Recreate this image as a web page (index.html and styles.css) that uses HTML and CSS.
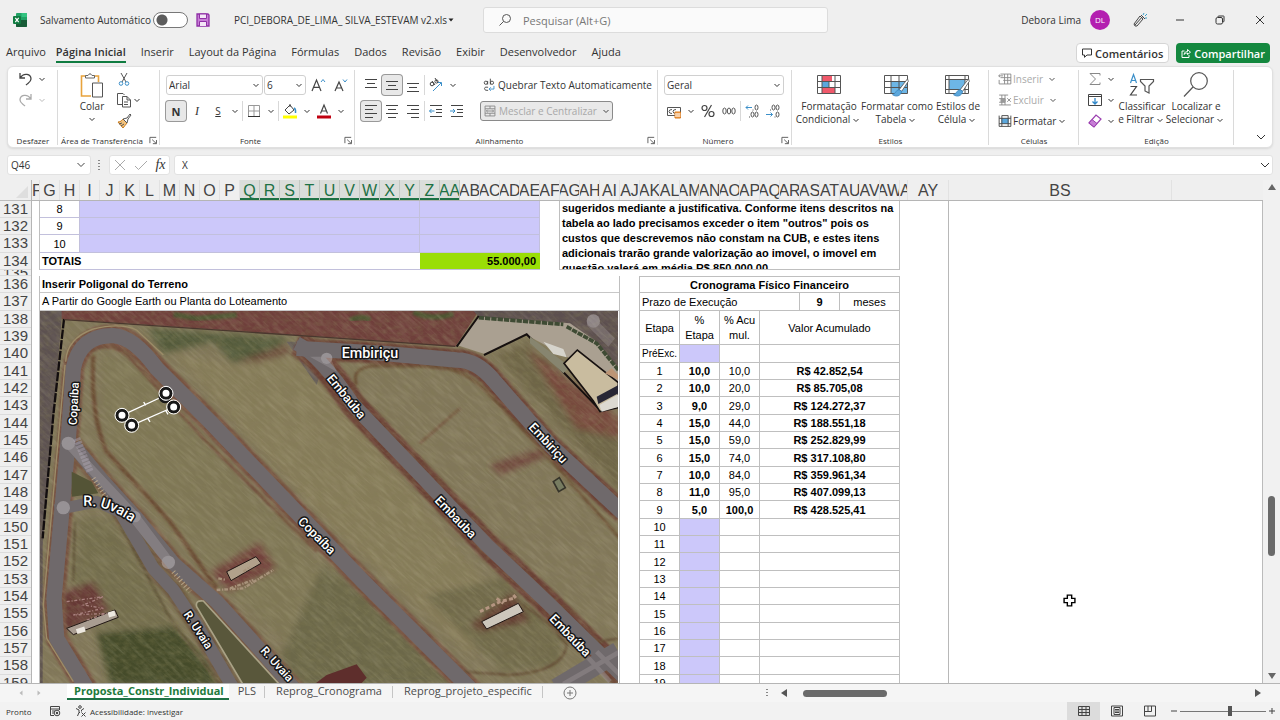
FILE: index.html
```html
<!DOCTYPE html>
<html lang="pt-BR">
<head>
<meta charset="utf-8">
<title>PCI_DEBORA_DE_LIMA_ SILVA_ESTEVAM v2.xls</title>
<link rel="stylesheet" href="styles.css">
</head>
<body>
<svg class="defs" aria-hidden="true">
  <symbol id="chev" viewBox="0 0 12 12"><path d="M3.500 5 6 7.500 8.500 5" fill="none" stroke="currentColor"/></symbol>
  <symbol id="launch" viewBox="0 0 10 10"><path d="M1 8V1.500H8M3.500 4 8 8.300M8.300 4.500V8.500H4.300" fill="none" stroke="#555"/></symbol>
  <symbol id="brush" viewBox="0 0 20 24"><path d="M19 1 9 14l3 2L20 4z" fill="#fff" stroke="#555"/><path d="M9 14c-4 0-4 5-8 6 4 3 10 2 11-4z" fill="#5ba7dc" stroke="#3a87c0"/></symbol>
</svg>

<header class="titlebar">
  <svg class="logo" viewBox="0 0 14 14"><rect x="3" y="0" width="11" height="14" rx="1" fill="#21a366"/><path d="M8.500 0H13a1 1 0 0 1 1 1v3H8.500z" fill="#33c481"/><path d="M3 7h11v6a1 1 0 0 1-1 1H4a1 1 0 0 1-1-1z" fill="#185c37"/><rect y="3" width="8" height="8" rx="1" fill="#107c41"/><path d="m2.300 4.800 3.400 4.400m0-4.400L2.300 9.200" stroke="#fff" stroke-width="1.200"/></svg>
  <label class="autosave">Salvamento Automático <input type="checkbox" class="toggle"></label>
  <button class="plain save" aria-label="Salvar"><svg viewBox="0 0 14 14"><path d="M1 1h11l1 1v11H1z" fill="#c77ed6" stroke="#8f2fa5" stroke-width="1.300"/><path d="M3.500 1h7v4.500h-7zM3.500 13V8.500h7V13" fill="#f4e6f7" stroke="#8f2fa5"/></svg></button>
  <button class="plain docname">PCI_DEBORA_DE_LIMA_ SILVA_ESTEVAM v2.xls <svg viewBox="0 0 8 8"><path d="M1.500 2.500h5L4 5.500z" fill="#222"/></svg></button>
  <label class="search"><svg viewBox="0 0 14 14"><circle cx="8.500" cy="5.500" r="4" fill="none" stroke="#555"/><path d="M5.500 8.500 1.500 12.500" stroke="#555"/></svg><input type="text" placeholder="Pesquisar (Alt+G)" aria-label="Pesquisar"></label>
  <div class="account">
    <span>Debora Lima</span><span class="avatar">DL</span>
    <button class="plain win" aria-label="Novidades"><svg viewBox="0 0 16 16"><path d="M8 4 2 12l1 2h2l6-7zM3 13l8-9M9 3l4 4" fill="none" stroke="#444"/><path d="m11 3 1-2M13 4l2-2M13 6l2 0" stroke="#3aa0c8"/></svg></button>
    <button class="plain win" aria-label="Minimizar"><svg viewBox="0 0 16 16"><path d="M4 8h8" stroke="#333"/></svg></button>
    <button class="plain win" aria-label="Restaurar"><svg viewBox="0 0 16 16"><rect x="4" y="5.500" width="6.500" height="6.500" rx="1.500" fill="none" stroke="#333"/><path d="M6 5V4.500q0-.5 1-.5h4.500q.5 0 .5.500V9q0 1-1 1" fill="none" stroke="#333"/></svg></button>
    <button class="plain win" aria-label="Fechar"><svg viewBox="0 0 16 16"><path d="m4 4 8 8m0-8-8 8" stroke="#333"/></svg></button>
  </div>
</header>

<nav class="tabs">
  <a href="#" class="file">Arquivo</a><a href="#" class="active">Página Inicial</a><a href="#">Inserir</a><a href="#">Layout da Página</a><a href="#">Fórmulas</a><a href="#">Dados</a><a href="#">Revisão</a><a href="#">Exibir</a><a href="#">Desenvolvedor</a><a href="#">Ajuda</a>
  <div class="tab-actions">
    <button class="comment"><svg viewBox="0 0 10 10"><path d="M.5 1h9v6H5L2.500 9.300V7h-2z" fill="none" stroke="#333"/></svg>Comentários</button>
    <button class="share"><svg viewBox="0 0 10 10"><path d="M3.500 3H1v6.500h7V7M3 6.500C3.500 4 5 3.500 6.500 3.500V1.500L9.500 4.200 6.500 6.500V5C5 5 4 5.500 3 6.500z" fill="none" stroke="#fff"/></svg>Compartilhar</button>
  </div>
</nav>

<section class="ribbon">
  <div class="group g-undo">
    <div class="body three">
      <div class="row"><button class="ib"><svg viewBox="0 0 20 20"><path d="M4 4v5h5M4 9c4-6 11-4 11 1 0 3-3 4-5 6" fill="none" stroke="#444" stroke-width="1.300"/></svg></button><button class="cv"><svg><use href="#chev"/></svg></button></div>
      <div class="row off"><button class="ib"><svg viewBox="0 0 20 20"><path d="M15 4v5h-5M15 9C11 3 4 5 4 10c0 3 3 4 5 6" fill="none" stroke="#aaa" stroke-width="1.300"/></svg></button><button class="cv"><svg><use href="#chev"/></svg></button></div>
    </div>
    <div class="glabel">Desfazer</div>
  </div>

  <div class="group g-clip">
    <div class="body">
      <button class="big"><svg viewBox="0 0 24 26"><path d="M6 4H1.500v20H11M14 4h4.500v6" fill="none" stroke="#e8a33d" stroke-width="1.600"/><path d="M5.500 6V3.500H8Q10 0 12 3.500h2.500V6z" fill="#fff" stroke="#666"/><path d="M12.500 11h10v14h-10z" fill="#fff" stroke="#555"/></svg><span>Colar</span><svg class="c"><use href="#chev"/></svg></button>
      <div class="three">
        <div class="row"><button class="ib"><svg viewBox="0 0 20 20"><path d="m7 4 5 9M13 4 8 13" stroke="#555" fill="none"/><circle cx="7" cy="14.500" r="1.800" fill="none" stroke="#3b8fc9"/><circle cx="13" cy="14.500" r="1.800" fill="none" stroke="#3b8fc9"/></svg></button></div>
        <div class="row"><button class="ib"><svg viewBox="0 0 20 20"><path d="M8 14.500H3.500v-11H9l1.500 1.500M8.500 6.500h4.500l3.500 3.500v7h-8zM13 6.500V10h3.500M10 12h4M10 14.500h4" fill="none" stroke="#555"/></svg></button><button class="cv"><svg><use href="#chev"/></svg></button></div>
        <div class="row"><button class="ib"><svg viewBox="0 0 20 20"><path d="M4 11c3 0 4-2 5-3l4 4c-1 2-3 3-4 5z" fill="#f3c27c" stroke="#c87a1c"/><path d="m9 8 4-1 3-4 1 1-3 4-1 4zM5 13l3-1M7 15l3-2" fill="none" stroke="#555"/></svg></button></div>
      </div>
    </div>
    <div class="glabel">Área de Transferência<svg class="la"><use href="#launch"/></svg></div>
  </div>

  <div class="group g-font">
    <div class="body two">
      <div class="row">
        <span class="sel s-font"><select aria-label="Fonte"><option>Arial</option></select><svg><use href="#chev"/></svg></span>
        <span class="sel s-size"><select aria-label="Tamanho"><option>6</option></select><svg><use href="#chev"/></svg></span>
        <button class="ib"><svg viewBox="0 0 20 20"><path d="m4 16 4.500-11L13 16M5.500 12.300h6" fill="none" stroke="#444" stroke-width="1.200"/><path d="m13 7 2-2.500L17 7" fill="none" stroke="#3b8fc9"/></svg></button>
        <button class="ib"><svg viewBox="0 0 20 20"><path d="m5 16 4-9 4 9M6.500 13h5" fill="none" stroke="#444" stroke-width="1.200"/><path d="m13 4.500 2 2.500 2-2.500" fill="none" stroke="#3b8fc9"/></svg></button>
      </div>
      <div class="row">
        <button class="ib on bold">N</button><button class="ib ital">I</button><button class="ib under">S</button><button class="cv"><svg><use href="#chev"/></svg></button><i class="sp"></i>
        <button class="ib"><svg viewBox="0 0 20 20"><path d="M4.500 4.500h11v11h-11zM10 4.500v11M4.500 10h11" fill="none" stroke="#999"/><path d="M4 15.500h12" stroke="#333"/></svg></button><button class="cv"><svg><use href="#chev"/></svg></button><i class="sp"></i>
        <button class="ib"><svg viewBox="0 0 20 20"><path d="m5 9 5-5 4 5-5 4zM10 6V3" fill="none" stroke="#444"/><path d="M14 7q2 1 1.500 5" fill="none" stroke="#3b8fc9" stroke-width="1.500"/><path d="M3 14.500h14v3H3z" fill="#ff0"/></svg></button><button class="cv"><svg><use href="#chev"/></svg></button>
        <button class="ib"><svg viewBox="0 0 20 20"><path d="M6.500 12.500 10 4l3.500 8.500M7.500 10h5" fill="none" stroke="#444" stroke-width="1.200"/><path d="M3 14.500h14v3H3z" fill="#c00010"/></svg></button><button class="cv"><svg><use href="#chev"/></svg></button>
      </div>
    </div>
    <div class="glabel">Fonte<svg class="la"><use href="#launch"/></svg></div>
  </div>

  <div class="group g-align">
    <div class="body two">
      <div class="row">
        <button class="ib"><svg viewBox="0 0 20 20"><path d="M4 4.500h12M6 8.500h8M4 12.500h12" stroke="#444"/></svg></button>
        <button class="ib on"><svg viewBox="0 0 20 20"><path d="M4 6.500h12M6 10.500h8M4 14.500h12" stroke="#444"/></svg></button>
        <button class="ib"><svg viewBox="0 0 20 20"><path d="M4 8.500h12M6 12.500h8M4 16.500h12" stroke="#444"/></svg></button><i class="sp"></i>
        <button class="ib"><svg viewBox="0 0 20 20"><g fill="none" stroke="#444"><circle cx="6" cy="9" r="1.800"/><path d="m6 6 3 4M9 3l3 5"/><circle cx="10.500" cy="6.500" r="1.600"/></g><path d="m7 16 8-8M12 7.500h3.500V11" fill="none" stroke="#3b8fc9"/></svg></button><button class="cv"><svg><use href="#chev"/></svg></button>
      </div>
      <div class="row">
        <button class="ib on"><svg viewBox="0 0 20 20"><path d="M4 4.500h12M4 8.500h8M4 12.500h12M4 16.500h8" stroke="#444"/></svg></button>
        <button class="ib"><svg viewBox="0 0 20 20"><path d="M4 4.500h12M6 8.500h8M4 12.500h12M6 16.500h8" stroke="#444"/></svg></button>
        <button class="ib"><svg viewBox="0 0 20 20"><path d="M4 4.500h12M8 8.500h8M4 12.500h12M8 16.500h8" stroke="#444"/></svg></button><i class="sp"></i>
        <button class="ib"><svg viewBox="0 0 20 20"><path d="M4 4.500h12M10 8.500h6M10 11.500h6M4 15.500h12" stroke="#444"/><path d="M8.500 10h-5m2-2-2 2 2 2" fill="none" stroke="#3b8fc9"/></svg></button>
        <button class="ib"><svg viewBox="0 0 20 20"><path d="M4 4.500h12M10 8.500h6M10 11.500h6M4 15.500h12" stroke="#444"/><path d="M3 10h5m-2-2 2 2-2 2" fill="none" stroke="#3b8fc9"/></svg></button>
      </div>
    </div>
    <div class="body two wraps">
      <div class="row"><button class="txt"><svg viewBox="0 0 20 20"><g fill="none" stroke="#444"><circle cx="6.500" cy="7.500" r="1.800"/><path d="M8.500 5.500v4M11.500 3v6.500M9 12.500q-4-1-4 1.500t4 2"/><circle cx="13.300" cy="7.500" r="1.800"/></g><path d="M15.500 11v3.500H10m2-2-2 2 2 2" fill="none" stroke="#3b8fc9"/></svg>Quebrar Texto Automaticamente</button></div>
      <div class="row"><button class="txt merge"><svg viewBox="0 0 20 20"><path d="M4.500 4.500h11v11h-11zM4.500 7.500h11M4.500 12.500h11M10 4.500v3M10 12.500v3M6 10h8M7.500 8.500 6 10l1.500 1.500M12.500 8.500 14 10l-1.500 1.500" fill="none" stroke="#888"/></svg>Mesclar e Centralizar<svg class="c"><use href="#chev"/></svg></button></div>
    </div>
    <div class="glabel">Alinhamento<svg class="la"><use href="#launch"/></svg></div>
  </div>

  <div class="group g-num">
    <div class="body two">
      <div class="row"><span class="sel s-num"><select aria-label="Formato de número"><option>Geral</option></select><svg><use href="#chev"/></svg></span></div>
      <div class="row">
        <button class="ib"><svg viewBox="0 0 20 20"><path d="M3.500 6.500h13v8h-13z" fill="none" stroke="#555"/><path d="M8 8.500q-3 0-3 2t3 2M12 8.500q-3 0-3 2t3 2" fill="none" stroke="#555"/><path d="M11 11h5.500v6H11z" fill="#f3a04f" stroke="#d97a1c"/><path d="M11 13h5.500M11 15h5.500" stroke="#fff"/></svg></button><button class="cv"><svg><use href="#chev"/></svg></button>
        <button class="ib"><svg viewBox="0 0 20 20"><g fill="none" stroke="#444" stroke-width="1.200"><circle cx="6.500" cy="7" r="2.500"/><circle cx="13.500" cy="13" r="2.500"/><path d="M13.500 4 6.500 16"/></g></svg></button>
        <button class="ib"><svg viewBox="0 0 20 20"><g fill="none" stroke="#555"><ellipse cx="5.500" cy="10" rx="1.700" ry="3"/><ellipse cx="10" cy="10" rx="1.700" ry="3"/><ellipse cx="14.500" cy="10" rx="1.700" ry="3"/></g></svg></button><i class="sp"></i>
        <button class="ib"><svg viewBox="0 0 20 20"><g fill="none" stroke="#555"><ellipse cx="14.500" cy="6.500" rx="1.500" ry="2.500"/><ellipse cx="10.500" cy="13.500" rx="1.500" ry="2.500"/><ellipse cx="14.500" cy="13.500" rx="1.500" ry="2.500"/><path d="M7 16h1M10.500 9h1"/></g><path d="M10 6.500H4m2-2-2 2 2 2" fill="none" stroke="#3b8fc9"/></svg></button>
        <button class="ib"><svg viewBox="0 0 20 20"><g fill="none" stroke="#555"><ellipse cx="10.500" cy="6.500" rx="1.500" ry="2.500"/><ellipse cx="14.500" cy="6.500" rx="1.500" ry="2.500"/><ellipse cx="14.500" cy="13.500" rx="1.500" ry="2.500"/><path d="M7 9h1M11.500 16h1"/></g><path d="M3 13.500h6.500m-2-2 2 2-2 2" fill="none" stroke="#3b8fc9"/></svg></button>
      </div>
    </div>
    <div class="glabel">Número<svg class="la"><use href="#launch"/></svg></div>
  </div>

  <div class="group g-style">
    <div class="body bigs">
      <button class="big"><svg viewBox="0 0 24 26"><path d="M.5 3.500h23v18H.5z" fill="#fff"/><path d="M5 3.500h10v6H5zM5 15.500h13v6H5z" fill="#f0596b"/><path d="M5 9.500h7v6H5z" fill="#5ba7dc"/><path d="M.5 3.500h23v18H.5zM.5 9.500h23M.5 15.500h23M5 3.500v18M18 3.500v18M12 9.500v6" fill="none" stroke="#555"/></svg><span>Formatação<br>Condicional<svg class="c"><use href="#chev"/></svg></span></button>
      <button class="big wide"><svg viewBox="0 0 26 26"><path d="M.5 3.500h23v18H.5z" fill="#fff"/><path d="M7 9.500h16.500v12H7z" fill="#6db6e6"/><path d="M.5 3.500h23v18H.5zM.5 9.500h23M.5 15.500h23M7 3.500v18M15 3.500v18" fill="none" stroke="#555"/><use href="#brush" x="7" y="6" width="18" height="20"/></svg><span>Formatar como<br>Tabela<svg class="c"><use href="#chev"/></svg></span></button>
      <button class="big"><svg viewBox="0 0 26 26"><path d="M.5 3.500h23v18H.5z" fill="#fff"/><path d="M4 7.500h16v10H4z" fill="#6db6e6"/><path d="M.5 3.500h23v18H.5zM4 3.500v18M20 3.500v18M.5 7.500h23M.5 17.500h23" fill="none" stroke="#555"/><use href="#brush" x="7" y="6" width="18" height="20"/></svg><span>Estilos de<br>Célula<svg class="c"><use href="#chev"/></svg></span></button>
    </div>
    <div class="glabel">Estilos</div>
  </div>

  <div class="group g-cell">
    <div class="body three">
      <div class="row"><button class="txt dim"><svg viewBox="0 0 20 20"><path d="M5.500 4.500h11v11h-13V11M5.500 8.500h11M8 11.500h8.500M9.500 4.500v11M13 4.500v11M8 6.500H3m2-2-2 2 2 2" fill="none" stroke="#888"/></svg>Inserir<svg class="c far"><use href="#chev"/></svg></button></div>
      <div class="row"><button class="txt dim"><svg viewBox="0 0 20 20"><path d="M3.500 4.500h10M3.500 15.500h13M3.500 8.500H10v4H3.500M6.500 4.500v11M10 4.500v11M12.500 8l4 4m0-4-4 4" fill="none" stroke="#888"/><path d="M5 8.500h5v4H5z" fill="#999"/></svg>Excluir<svg class="c far"><use href="#chev"/></svg></button></div>
      <div class="row"><button class="txt"><svg viewBox="0 0 20 20"><path d="M6 7h8v6H6z" fill="#5ba7dc"/><path d="M3.500 4v12M16.500 4v12M3.500 7h13M3.500 13h13M6.500 4v12M13.500 4v12M3.500 16h13M6.500 4h7" fill="none" stroke="#444"/></svg>Formatar<svg class="c"><use href="#chev"/></svg></button></div>
    </div>
    <div class="glabel">Células</div>
  </div>

  <div class="group g-edit">
    <div class="body">
      <div class="three">
        <div class="row"><button class="ib"><svg viewBox="0 0 20 20"><path d="M15 6.500V4.500H5l5.500 5.500L5 15.500h10v-2" fill="none" stroke="#888"/></svg></button><button class="cv"><svg><use href="#chev"/></svg></button></div>
        <div class="row"><button class="ib"><svg viewBox="0 0 20 20"><path d="M3.500 4.500h13v11h-13zM3.500 6.500h13" fill="none" stroke="#444"/><path d="M10 8v6m-2.500-2.500L10 14l2.500-2.500" fill="none" stroke="#2e86c9" stroke-width="1.300"/></svg></button><button class="cv"><svg><use href="#chev"/></svg></button></div>
        <div class="row"><button class="ib"><svg viewBox="0 0 20 20"><path d="m4 12 7-8 5 4-7 8z" fill="#fff" stroke="#9b3fb0" stroke-width="1.200"/><path d="m4 12 3-3.500 5 4L9 16z" fill="#c77ed6" stroke="#9b3fb0"/></svg></button><button class="cv"><svg><use href="#chev"/></svg></button></div>
      </div>
      <button class="big"><svg viewBox="0 0 26 26"><path d="m1.500 11 3-8.500 3 8.500M2.500 8.500h4" fill="none" stroke="#3b8fc9" stroke-width="1.200"/><path d="M1.500 14.500h6l-6 8.500h6.500" fill="none" stroke="#444" stroke-width="1.200"/><path d="M11.500 7.500h13v2L20 14v7l-4-2v-5l-4.500-4.500z" fill="#fff" stroke="#555" stroke-width="1.200"/></svg><span>Classificar<br>e Filtrar<svg class="c"><use href="#chev"/></svg></span></button>
      <button class="big wide2"><svg viewBox="0 0 26 26"><circle cx="16" cy="9" r="8.300" fill="none" stroke="#555" stroke-width="1.200"/><path d="M10 15 1 24.500" stroke="#555" stroke-width="1.200"/></svg><span>Localizar e<br>Selecionar<svg class="c"><use href="#chev"/></svg></span></button>
    </div>
    <div class="glabel">Edição</div>
  </div>
  <div class="ribbon-end"><button class="plain" aria-label="Recolher"><svg viewBox="0 0 12 12"><path d="m2 4 4 4 4-4" fill="none" stroke="#333"/></svg></button></div>
</section>

<section class="fbar">
  <label class="namebox"><input type="text" value="Q46" aria-label="Caixa de nome"><svg viewBox="0 0 12 12"><path d="m2.500 4 3.500 3.500L9.500 4" fill="none" stroke="#444"/></svg></label>
  <svg class="dots" viewBox="0 0 4 14"><path d="M1 2h2v1H1zM1 5h2v1H1zM1 8h2v1H1zM1 11h2v1H1z" fill="#888"/></svg>
  <div class="fx">
    <button class="plain" aria-label="Cancelar"><svg viewBox="0 0 14 14"><path d="m2 2 10 10m0-10L2 12" stroke="#aaa"/></svg></button>
    <button class="plain" aria-label="Inserir"><svg viewBox="0 0 14 14"><path d="m1 8 3.500 3.500L13 3" fill="none" stroke="#aaa"/></svg></button>
    <button class="plain fxl">fx</button>
  </div>
  <label class="formula"><input type="text" value="X" aria-label="Barra de fórmulas"><svg viewBox="0 0 12 12"><path d="m2 4 4 4 4-4" fill="none" stroke="#333"/></svg></label>
</section>

<main class="book">
  <div class="rowheads">
    <div class="corner"><svg viewBox="0 0 14 14"><path d="M13 1v12H1z" fill="#dedede"/></svg></div>
    <div class="rh-a"><b>131</b><b>132</b><b class="t">133</b><b>134</b><b class="tiny">135</b></div>
    <div class="rh-b"><b>136</b><b>137</b><b>138</b><b>139</b><b>140</b><b>141</b><b>142</b><b>143</b><b>144</b><b>145</b><b>146</b><b>147</b><b>148</b><b>149</b><b>150</b><b>151</b><b>152</b><b>153</b><b>154</b><b>155</b><b>156</b><b>157</b><b>158</b><b>159</b></div>
  </div>
  <div class="sheet">
    <div class="cols"><b class="n">F</b><b>G</b><b>H</b><b>I</b><b>J</b><b>K</b><b>L</b><b>M</b><b>N</b><b>O</b><b>P</b><b class="s">Q</b><b class="s">R</b><b class="s">S</b><b class="s">T</b><b class="s">U</b><b class="s">V</b><b class="s">W</b><b class="s">X</b><b class="s">Y</b><b class="s">Z</b><b class="s">AA</b><b>AB</b><b>AC</b><b>AD</b><b>AE</b><b>AF</b><b>AG</b><b>AH</b><b>AI</b><b>AJ</b><b>AK</b><b>AL</b><b>AM</b><b>AN</b><b>AO</b><b>AP</b><b>AQ</b><b>AR</b><b>AS</b><b>AT</b><b>AU</b><b>AV</b><b>AW</b><b class="n">AX</b><b class="ay">AY</b><b class="bs">BS</b></div>
    <div class="cells">
      <div class="pane">
        <div class="upper">
          <table class="items">
            <colgroup><col class="w40"><col><col class="w120"></colgroup>
            <tr><td>8</td><td class="lil"></td><td class="lil"></td></tr>
            <tr><td>9</td><td class="lil"></td><td class="lil"></td></tr>
            <tr class="t"><td>10</td><td class="lil"></td><td class="lil"></td></tr>
            <tr><th colspan="2" class="tot">TOTAIS</th><td class="sum">55.000,00</td></tr>
          </table>
          <p class="note">sugeridos mediante a justificativa. Conforme itens descritos na<br>tabela ao lado precisamos exceder o item "outros" pois os<br>custos que descrevemos não constam na CUB, e estes itens<br>adicionais trarão grande valorização ao imovel, o imovel em<br>questão valerá em média R$ 850.000,00.</p>
        </div>
        <div class="lower">
          <div class="plot">
            <h2>Inserir Poligonal do Terreno</h2>
            <p>A Partir do Google Earth ou Planta do Loteamento</p>
            <svg class="map" viewBox="30 18 1734 1119" preserveAspectRatio="none">
              <defs>
                <filter id="grain" x="0" y="0" width="100%" height="100%"><feTurbulence type="fractalNoise" baseFrequency=".05 .08" numOctaves="4" seed="4"/><feColorMatrix values="0 0 0 0 .22  0 0 0 0 .2  0 0 0 0 .08  1.400 0 0 0 -.5"/></filter>
                <filter id="light" x="0" y="0" width="100%" height="100%"><feTurbulence type="fractalNoise" baseFrequency=".015 .12" numOctaves="4" seed="9"/><feColorMatrix values="0 0 0 0 .75  0 0 0 0 .7  0 0 0 0 .5  0 1.500 0 0 -.6"/></filter>
                <filter id="soft"><feGaussianBlur stdDeviation="9"/></filter>
                <filter id="fine"><feGaussianBlur stdDeviation="3"/></filter>
                <path id="rCop" d="M170 1150 80 1000 72 880 115 400 130 190Q150 90 250 92 310 95 380 190L540 350 870 695 1000 830 1330 1160"/>
                <path id="rEmb" d="M800 115Q870 150 970 300L1190 530 1370 720 1550 890 1780 1115"/>
                <path id="rBir" d="M800 130 1060 145 1280 165Q1340 165 1390 225L1560 420 1780 625"/>
                <path id="rUva" d="M130 420 220 530 320 640 430 775 560 890 660 1000 800 1160"/>
                <path id="rUv2" d="M265 610 370 790 430 855 500 960 610 1150"/>
                <path id="uvText" d="M160 603Q225 596 310 655"/>
              </defs>
              <rect x="30" y="18" width="1740" height="1120" fill="#81775a"/>
              <g filter="url(#soft)">
                <path d="M350 70 780 100 700 150 610 175 550 110 400 145z" fill="#535a3b"/>
                <path d="M215 150 330 170 520 400 800 700 920 850 850 1090 560 820 420 650 230 420z" fill="#7f7756"/>
                <path d="M430 150 620 180 800 150 1100 500 1390 860 1320 1050 900 660z" fill="#867b5a"/>
                <path d="M150 640 240 640 400 900 430 970 200 980 130 830z" fill="#736d4d"/>
                <path d="M200 985 430 965 530 1070 560 1140 240 1140z" fill="#444c2c"/>
                <path d="M880 780 1050 900 1270 1140 820 1140 750 1060z" fill="#6c6849"/>
                <path d="M1180 870 1420 820 1600 1000 1580 1080 1420 1100z" fill="#716b4b"/>
                <path d="M1400 150 1500 110 1770 390 1770 560z" fill="#6e6546"/>
                <path d="M1490 130 1770 340 1770 400 1640 370z" fill="#77483d"/>
                <path d="M100 860 190 830 240 920 120 975 95 960z" fill="#663836"/>
                <path d="M540 800 690 710 740 790 600 860z" fill="#73433d"/>
                <path d="M1380 480 1540 430 1560 450 1410 510z" fill="#70463e"/>
                <path d="M1320 960 1450 860 1500 950 1350 980z" fill="#643c32"/>
                <path d="M620 170 770 120 780 145 680 170z" fill="#6c4a3b"/>
              </g>
              <path d="M30 18H97L38 720V1137H30z" fill="#5c5150"/>
              <path d="M95 18H1346L1276 125 900 97 95 42z" fill="#6f3f3b"/>
              <path d="M430 28 500 40 620 30M960 45q40-15 60 0M1150 22q60 25 120 5" stroke="#4d5433" stroke-width="16" fill="none" filter="url(#fine)"/>
              <path d="M1330 18H1770V190L1640 70 1346 35z" fill="#5c4f4f"/>
              <path d="M770 110H900L860 240z" fill="#665e5b"/>
              <g fill="none" filter="url(#fine)">
                <g stroke="#6b3f35" stroke-width="76"><use href="#rEmb"/><use href="#rBir" stroke-width="64"/></g>
                <use href="#rCop" stroke="#765041" stroke-width="66"/>
                <use href="#rUva" stroke="#765543" stroke-width="60"/><use href="#rUv2" stroke="#6e5943" stroke-width="54"/>
                <path d="M175 140Q250 100 310 170L520 400 860 740" stroke="#704a39" stroke-width="8"/>
                <path d="M980 240Q960 185 1040 182L1220 185Q1300 190 1370 260L1530 430 1770 700" stroke="#6b4f36" stroke-width="9"/>
                <path d="M190 150Q180 330 230 440L420 650 560 850" stroke="#6b4c35" stroke-width="13"/>
                <path d="M1300 1100 1440 1110Q1600 1100 1610 1020 1560 950 1480 900M1560 900 1700 1010 1770 1000" stroke="#634d36" stroke-width="7"/>
                <path d="M135 650 130 830M270 660 420 940 570 1140" stroke="#5c5034" stroke-width="7"/>
                <path d="M1170 415 1290 310" stroke="#775b45" stroke-width="9"/>
              </g>
              <rect x="30" y="18" width="1740" height="1120" filter="url(#grain)" opacity=".42"/>
              <rect x="-800" y="-800" width="3200" height="3000" filter="url(#light)" opacity=".22" transform="rotate(42 800 570)"/>
              <g fill="none" stroke="#6f696b" stroke-width="43" stroke-linejoin="round">
                <use href="#rCop" stroke-width="46"/><use href="#rEmb"/><use href="#rBir" stroke-width="46"/><use href="#rUva"/><use href="#rUv2" stroke-width="38"/>
                <path d="M75 615 200 590 290 630" stroke-width="34"/><path d="M1580 1150 1765 1040" stroke-width="60"/>
              </g>
              <path d="M1770 1040 1600 1137M1640 1020l100 110M1700 1040l70 70" stroke="#968d90" stroke-width="14" opacity=".5"/>
              <path d="M107 170Q110 100 190 72 270 52 320 75L400 150M105 180 40 900 50 1000 130 1130" fill="none" stroke="#9c8c68" stroke-width="4"/>
              <path d="M102 42 70 330 38 700" fill="none" stroke="#120d0e" stroke-width="7" stroke-dasharray="28 4"/>
              <path d="M102 44 900 98 1276 124" fill="none" stroke="#4a372e" stroke-width="4"/>
              <path d="M125 500 185 530 205 565 125 575z" fill="#545436"/>
              <path d="M640 1140 500 905Q495 885 520 888L750 1140z" fill="#59573b" stroke="#a9a286" stroke-width="5"/>
              <path d="M140 400 180 500" stroke="#a39aa8" stroke-width="22" opacity=".5" stroke-dasharray="8 3"/>
              <path d="m190 520 40 60M430 800l50 60" stroke="#b5a386" stroke-width="14" stroke-dasharray="3 8"/>
              <path d="M1346 35 1620 55 1700 110 1765 190V240L1490 90 1366 148 1280 120z" fill="#aaa091"/>
              <path d="M1346 38 1600 58M1610 65l90 50 65 80" fill="none" stroke="#3f4b34" stroke-width="11" stroke-dasharray="16 3"/>
              <path d="m1280 125 66-92M1362 150l128-62 225 232" fill="none" stroke="#16100f" stroke-width="6"/>
              <path d="m1500 95 120 90-20 20-100-90z" fill="#87856f"/><path d="m1540 110 60 22 10 25-40-10z" fill="#d6d4cc"/>
              <path d="m1602 175 40-40 123 98v75l-55 12-20-32z" fill="#c9bc9f" stroke="#171110" stroke-width="5"/>
              <path d="m1700 275 65-35v25l-60 32z" fill="#282735"/><path d="m1725 205 20-15 20 20v15z" fill="#bd9575"/>
              <path d="m1708 300 57-32v38l-50 14z" fill="#dcd9d1"/>
              <g stroke="#211714" stroke-width="3"><path d="m590 800 88-45 15 20-90 52z" fill="#b1a18b"/><path d="m1355 950 110-55 15 25-110 52z" fill="#cdc6bc"/><path d="m110 970 145-55 10 22-135 52z" fill="#a99d91"/></g>
              <path d="m560 855 80-5 90-55M640 800l20-14M600 850l70-25M565 820l20 4" fill="none" stroke="#a8937b" stroke-width="7" stroke-dasharray="11 5 4 3"/>
              <path d="M1350 920l60-30 40-10M1400 880l20 15M1450 870l10 12" fill="none" stroke="#b49581" stroke-width="9" stroke-dasharray="12 7"/>
              <path d="m110 890 110-15-60 25 60 10-90 20 100-5-60 20" fill="none" stroke="#a8817e" stroke-width="4" stroke-dasharray="9 6 3 5"/>
              <path d="m140 980 25-8M235 930l20-6" stroke="#ede8e0" stroke-width="15"/>
              <path d="m850 1140 40-30 90-32 30 40-20 22z" fill="#5e2e2c"/>
              <path d="m1570 530 18-12 18 30-20 12z" fill="#777c61" stroke="#36342a" stroke-width="5"/>
              <g fill="#c9c4c8" opacity=".45"><circle cx="115" cy="415" r="20"/><circle cx="315" cy="635" r="17"/><circle cx="415" cy="772" r="20"/><circle cx="100" cy="608" r="20"/><circle cx="890" cy="160" r="17"/><circle cx="1690" cy="48" r="20"/><path d="M120 405 325 625 305 645 105 425zM325 625l105 140-25 15-110-140zM840 155h60l20 45zM1690 35l65 65-20 25-65-65z" opacity=".5"/></g>
              <path d="M276 331 408 270M305 361 431 306M341 291l6 10M354 341l6 10M408 318l6 10" stroke="#fff" stroke-width="4"/>
              <g fill="#fff" stroke="#171717" stroke-width="9"><circle cx="405" cy="275" r="15"/><circle cx="408" cy="265" r="15"/><circle cx="431" cy="306" r="15"/><circle cx="276" cy="331" r="15"/><circle cx="305" cy="361" r="15"/></g>
              <g fill="none" stroke="#fff" stroke-width="3"><circle cx="408" cy="265" r="21"/><circle cx="431" cy="306" r="21"/><circle cx="276" cy="331" r="21"/><circle cx="305" cy="361" r="21"/></g>
              <g class="streets">
                <text transform="translate(140 361) rotate(-87)" class="narrow">Copaíba</text>
                <text transform="translate(935 158)" class="large">Embiriçu</text>
                <text transform="translate(889 221) rotate(51)">Embaúba</text>
                <text transform="translate(1494 368) rotate(47)">Embiriçu</text>
                <text transform="translate(1212 588) rotate(46)">Embaúba</text>
                <text transform="translate(1556 943) rotate(46)">Embaúba</text>
                <text transform="translate(802 652) rotate(45)">Copaíba</text>
                <text transform="translate(460 928) rotate(57)" class="narrow">R. Uvaia</text>
                <text transform="translate(690 1038) rotate(48)" class="narrow">R. Uvaia</text>
                <text class="large"><textPath href="#uvText">R. Uvaia</textPath></text>
              </g>
            </svg>
          </div>
          <table class="sched">
            <colgroup><col class="w41"><col class="w40"><col class="w40"><col class="w40"><col class="w40"><col></colgroup>
            <tr><th colspan="6">Cronograma Físico Financeiro</th></tr>
            <tr><td colspan="4" class="left">Prazo de Execução</td><th>9</th><td>meses</td></tr>
            <tr><td rowspan="2">Etapa</td><td rowspan="2" class="two-line">%<br>Etapa</td><td rowspan="2" class="two-line">% Acu<br>mul.</td><td rowspan="2" colspan="3">Valor Acumulado</td></tr>
            <tr></tr>
            <tr><td class="pre">PréExc.</td><td class="lil"></td><td></td><td colspan="3"></td></tr>
            <tr><td>1</td><th>10,0</th><td>10,0</td><th colspan="3">R$ 42.852,54</th></tr>
            <tr><td>2</td><th>10,0</th><td>20,0</td><th colspan="3">R$ 85.705,08</th></tr>
            <tr><td>3</td><th>9,0</th><td>29,0</td><th colspan="3">R$ 124.272,37</th></tr>
            <tr><td>4</td><th>15,0</th><td>44,0</td><th colspan="3">R$ 188.551,18</th></tr>
            <tr><td>5</td><th>15,0</th><td>59,0</td><th colspan="3">R$ 252.829,99</th></tr>
            <tr><td>6</td><th>15,0</th><td>74,0</td><th colspan="3">R$ 317.108,80</th></tr>
            <tr><td>7</td><th>10,0</th><td>84,0</td><th colspan="3">R$ 359.961,34</th></tr>
            <tr><td>8</td><th>11,0</th><td>95,0</td><th colspan="3">R$ 407.099,13</th></tr>
            <tr><td>9</td><th>5,0</th><th>100,0</th><th colspan="3">R$ 428.525,41</th></tr>
            <tr><td>10</td><td class="lil"></td><td></td><td colspan="3"></td></tr>
            <tr><td>11</td><td class="lil"></td><td></td><td colspan="3"></td></tr>
            <tr><td>12</td><td class="lil"></td><td></td><td colspan="3"></td></tr>
            <tr><td>13</td><td class="lil"></td><td></td><td colspan="3"></td></tr>
            <tr><td>14</td><td class="lil"></td><td></td><td colspan="3"></td></tr>
            <tr><td>15</td><td class="lil"></td><td></td><td colspan="3"></td></tr>
            <tr><td>16</td><td class="lil"></td><td></td><td colspan="3"></td></tr>
            <tr><td>17</td><td class="lil"></td><td></td><td colspan="3"></td></tr>
            <tr><td>18</td><td class="lil"></td><td></td><td colspan="3"></td></tr>
            <tr><td>19</td><td class="lil"></td><td></td><td colspan="3"></td></tr>
          </table>
        </div>
      </div>
      <div class="empty"><svg class="cursor" viewBox="0 0 12 12"><path d="M4 1h4v3h3v4H8v3H4V8H1V4h3z" fill="#fff" stroke="#000" stroke-width="1.300"/></svg></div>
    </div>
  </div>
  <div class="vscroll">
    <button class="plain" aria-label="Para cima"><svg viewBox="0 0 10 10"><path d="M5 2 9 8H1z" fill="#666"/></svg></button>
    <div class="vtrack"><i class="before"></i><i class="thumb"></i><i class="after"></i></div>
    <button class="plain" aria-label="Para baixo"><svg viewBox="0 0 10 10"><path d="M5 8 9 2H1z" fill="#666"/></svg></button>
  </div>
</main>

<div class="sheetbar">
  <button class="plain nav" aria-label="Anterior"><svg viewBox="0 0 8 8"><path d="M5.500 1.500v5L2.500 4z" fill="#bbb"/></svg></button>
  <button class="plain nav" aria-label="Próxima"><svg viewBox="0 0 8 8"><path d="M2.500 1.500v5L5.500 4z" fill="#bbb"/></svg></button>
  <div class="stabs"><a href="#" class="cur">Proposta_Constr_Individual</a><a href="#" class="pls">PLS</a><a href="#">Reprog_Cronograma</a><a href="#">Reprog_projeto_especific</a></div>
  <button class="plain add" aria-label="Nova planilha"><svg viewBox="0 0 14 14"><circle cx="7" cy="7" r="6" fill="none" stroke="#777"/><path d="M7 4v6M4 7h6" stroke="#777"/></svg></button>
  <div class="hscroll">
    <svg class="dots" viewBox="0 0 4 14"><path d="M1 3h2v1H1zM1 6h2v1H1zM1 9h2v1H1z" fill="#888"/></svg>
    <button class="plain" aria-label="Esquerda"><svg viewBox="0 0 10 10"><path d="M2 5 8 1v8z" fill="#555"/></svg></button>
    <div class="htrack"><i class="thumb"></i></div>
    <button class="plain" aria-label="Direita"><svg viewBox="0 0 10 10"><path d="M8 5 2 1v8z" fill="#555"/></svg></button>
  </div>
</div>

<footer class="status">
  <span class="ready">Pronto</span>
  <svg class="rec" viewBox="0 0 12 12"><path d="M5 10.500H1.500v-9h9V5M1.500 4h9M3 6h3M3 8h2" fill="none" stroke="#444"/><circle cx="8" cy="8" r="2.800" fill="none" stroke="#444"/><circle cx="8" cy="8" r="1.200" fill="#444"/></svg>
  <svg class="acc" viewBox="0 0 12 12"><circle cx="5" cy="2" r="1.300" fill="none" stroke="#444"/><path d="M1 3.500 4 5v2.500L2.500 11M9 3.500 6.500 5v1.500M4 8l1-1M6.500 7.500l4 4m0-4-4 4" fill="none" stroke="#444"/></svg>
  <span>Acessibilidade: investigar</span>
  <div class="views">
    <button class="view sel-view" aria-label="Normal"><svg viewBox="0 0 12 12"><path d="M.5 1.500h11v9H.5zM.5 4.500h11M.5 7.500h11M4 1.500v9M8 1.500v9" fill="none" stroke="#444"/></svg></button>
    <button class="view" aria-label="Layout da página"><svg viewBox="0 0 12 12"><path d="M.5 1h11v10H.5zM3 2.500h6v7H3zM4 4.500h4M4 6h4M4 7.500h4" fill="none" stroke="#444"/></svg></button>
    <button class="view" aria-label="Quebra de página"><svg viewBox="0 0 12 12"><path d="M.5 1h11v10H.5zM4 1v5.500h3.500V1M.5 6.500H4" fill="none" stroke="#444"/></svg></button>
    <button class="plain z" aria-label="Reduzir"><svg viewBox="0 0 8 8"><path d="M1 4h6" stroke="#444"/></svg></button>
    <input type="range" min="0" max="100" value="58" aria-label="Zoom">
    <button class="plain z" aria-label="Ampliar"><svg viewBox="0 0 8 8"><path d="M1 4h6M4 1v6" stroke="#444"/></svg></button>
  </div>
</footer>
</body>
</html>
```
FILE: styles.css
```css
* { box-sizing: border-box; }
html, body { height: 100%; }
body {
  margin: 0;
  display: flex;
  flex-direction: column;
  overflow: hidden;
  background: #efefef;
  color: #333;
  font: 10px "Open Sans", "Noto Sans", sans-serif;
}
button, input, select { font: inherit; color: inherit; margin: 0; }
button { border: 0; background: none; padding: 0; white-space: nowrap; }
a { color: inherit; text-decoration: none; }
svg { display: block; flex: none; }
.defs { position: absolute; width: 0; height: 0; }
.plain { display: flex; align-items: center; justify-content: center; }

/* Title bar */
.titlebar { display: flex; align-items: center; height: 40px; flex: none; padding: 0 12px 0 13px; }
.logo { width: 14px; height: 14px; margin-right: 13px; }
.autosave { display: flex; align-items: center; width: 148px; white-space: nowrap; justify-content: space-between; }
.toggle {
  appearance: none; width: 35px; height: 16px; border: 1px solid #777; border-radius: 8px;
  background: radial-gradient(circle at 8px 7px, #5c5c5c 5px, #fff 6px);
}
.save { margin-left: 8px; }
.save svg { width: 14px; height: 14px; }
.docname { margin-left: 24px; width: 215px; justify-content: space-between; }
.docname svg { width: 8px; height: 8px; }
.search {
  display: flex; align-items: center; gap: 9px; flex: 0 1 345px; height: 26px; margin-left: 34px;
  padding-left: 14px; border: 1px solid #dcdcdc; border-radius: 3px; background: #fafafa;
}
.search svg { width: 14px; height: 14px; }
.search input { flex: 1; min-width: 0; border: 0; background: none; outline: 0; font-size: 11px; }
.search input::placeholder { color: #777; opacity: 1; }
.account { display: flex; align-items: center; margin-left: auto; white-space: nowrap; }
.avatar { width: 20px; height: 20px; margin: 0 22px 0 9px; border-radius: 50%; background: #b31fb0; color: #fff; font-size: 8px; line-height: 20px; text-align: center; }
.win { width: 16px; margin-right: 24px; }
.win:last-child { margin-right: 0; }
.win svg { width: 16px; height: 16px; }

/* Ribbon tabs */
.tabs { display: flex; align-items: center; gap: 15px; height: 26px; flex: none; padding: 0 10px 0 6px; font-size: 11px; white-space: nowrap; }
.tabs a { line-height: 18px; border-bottom: 2px solid transparent; }
.tabs .file { margin-right: -5px; }
.tabs .active { font-weight: 600; border-color: #107c41; }
.tab-actions { display: flex; gap: 7px; margin-left: auto; font-weight: 600; }
.tab-actions button { display: flex; align-items: center; gap: 3px; height: 20px; padding: 0 5px; border-radius: 4px; }
.tab-actions svg { width: 10px; height: 10px; }
.comment { background: #fff; border: 1px solid #d5d5d5; }
.share { background: #14883f; color: #fff; }

/* Ribbon */
.ribbon { display: flex; flex: none; height: 82px; margin: 0 7px; background: #fff; border: 1px solid #e0e0e0; border-radius: 6px; box-shadow: 0 1px 2px #d8d8d8; }
.group { position: relative; display: grid; grid-template-rows: 66px 14px; flex: none; }
.group::after { content: ""; position: absolute; right: 0; top: 3px; bottom: 2px; border-right: 1px solid #dadada; }
.g-undo { width: 50px; }
.g-clip { width: 102px; }
.g-font { width: 195px; }
.g-align { width: 303px; grid-template-columns: 119px 1fr; }
.g-num { width: 134px; }
.g-style { width: 197px; }
.g-cell { width: 90px; }
.g-edit { width: 155px; }
.body { display: flex; }
.glabel { grid-column: 1 / -1; display: flex; align-items: center; justify-content: center; padding-right: 14px; font-size: 8px; white-space: nowrap; position: relative; }
.g-undo .glabel, .g-style .glabel, .g-cell .glabel, .g-edit .glabel { padding-right: 0; }
.la { position: absolute; right: 2px; width: 9px; height: 9px; }
.two { display: grid; grid-template-rows: 26px 26px; padding: 5px 0 0 6px; }
.three { display: grid; grid-template-rows: 21px 21px 21px; padding-top: 1px; align-content: start; }
.row { display: flex; align-items: center; gap: 1px; }
.ib { display: flex; align-items: center; justify-content: center; width: 20px; height: 20px; }
.ib svg { width: 20px; height: 20px; }
.on { background: #e8e8e8; box-shadow: 0 0 0 1px #999; border-radius: 3px; }
.bold { font-weight: 700; font-size: 11px; }
.ital { font: italic 12px "Liberation Serif", serif; }
.under { text-decoration: underline; }
.cv, .cv svg, .c { width: 12px; height: 12px; }
.sp { width: 1px; height: 20px; background: #d8d8d8; }
.off .cv { color: #bbb; }
.g-undo .three { padding-left: 8px; }
.g-undo .row { gap: 0; }
.g-clip .big { width: 44px; margin-left: 12px; }
.g-clip .row { gap: 0; }
.g-clip .cv { margin-left: -3px; }
.big { display: flex; flex-direction: column; align-items: center; width: 60px; padding-top: 5px; line-height: 13px; }
.big > svg:first-child { width: 26px; height: 26px; margin-bottom: 2px; }
.big span .c { display: inline-block; vertical-align: middle; }
.sel { display: grid; align-items: center; height: 20px; border: 1px solid #d0d0d0; border-radius: 3px; background: #fff; }
.sel select { grid-area: 1 / 1; appearance: none; border: 0; background: none; padding: 0 2px; outline: 0; width: 100%; }
.sel svg { grid-area: 1 / 1; justify-self: end; width: 12px; height: 12px; pointer-events: none; }
.s-font { width: 97px; }
.s-size { width: 42px; }
.s-num { width: 120px; }
.g-font .row:first-child .ib { margin-left: 1px; }
.wraps { padding-left: 6px; }
.txt { display: flex; align-items: center; height: 20px; }
.txt svg { width: 18px; height: 18px; }
.txt svg.c { width: 12px; height: 12px; }
.merge { width: 133px; border: 1px solid #8a8a8a; border-radius: 3px; background: #e9e9e9; color: #a8a8a8; }
.merge .c { margin-left: auto; color: #444; }
.dim { color: #aaa; }
.dim .far { color: #555; margin-left: 3px; }
.g-style .bigs { padding-left: 7px; }
.wide { width: 76px; }
.g-style .big:last-child { width: 46px; }
.g-cell .three { padding-left: 7px; }
.g-cell .txt svg:first-child { margin-right: -1px; }
.g-edit .three { padding-left: 6px; }
.g-edit .three .row { gap: 0; }
.g-edit .big { width: 50px; }
.g-edit .wide2 { width: 58px; }
.ribbon-end { flex: 1; display: flex; align-items: flex-end; justify-content: flex-end; padding: 4px 5px; }
.ribbon-end svg, .namebox svg, .formula svg { width: 12px; height: 12px; }

/* Formula bar */
.fbar { display: flex; align-items: center; flex: none; height: 20px; margin: 7px 7px 5px; }
.fbar label, .fx { display: flex; align-items: center; height: 20px; background: #fff; border: 1px solid #e2e2e2; border-radius: 3px; }
.fbar input { flex: 1; min-width: 0; border: 0; background: none; outline: 0; padding: 0; }
.namebox { width: 84px; padding: 0 3px; }
.dots { width: 4px; height: 14px; }
.fbar .dots { margin: 0 8px 0 6px; }
.fx { width: 61px; margin-right: 4px; justify-content: space-around; }
.fx svg { width: 14px; height: 14px; }
.fxl { font: italic 14px "Liberation Serif", serif; }
.formula { flex: 1; padding: 0 1px 0 7px; }

/* Worksheet */
.book { display: flex; flex: 1; min-height: 0; overflow: hidden; font-family: "Liberation Sans", Arial, sans-serif; font-size: 11px; color: #000; }
.rowheads { width: 32px; flex: none; border-right: 1px solid #b5b5b5; }
.rowheads b { display: block; height: 17px; overflow: hidden; padding-right: 3px; border-bottom: 1px solid #dcdcdc; font-weight: 400; font-size: 15px; line-height: 16px; text-align: right; color: #444; }
.rowheads b.t, .rh-b b:nth-child(3n+2) { height: 18px; }
.rowheads b.tiny { height: 6px; line-height: 6px; }
.corner { display: flex; justify-content: flex-end; height: 21px; padding: 5px 2px 0 0; border-bottom: 1px solid #bdbdbd; }
.corner svg { width: 14px; height: 14px; }
.sheet { flex: 1; min-width: 0; display: flex; flex-direction: column; overflow: hidden; }
.cols { display: flex; flex: none; height: 21px; border-bottom: 1px solid #b5b5b5; }
.cols b { display: flex; justify-content: center; flex: none; width: 20px; overflow: hidden; border-right: 1px solid #e2e2e2; font-weight: 400; font-size: 16px; line-height: 22px; color: #444; }
.cols .n { width: 8px; justify-content: flex-start; }
.cols .ay { width: 41px; }
.cols .bs { width: 223px; }
.cols .s { background: #dbdedb; color: #1e7145; box-shadow: inset 0 -2px #1e7145; border-color: #c3c8c3; }
.cells { display: flex; flex: 1; min-height: 0; background: #fff; border-right: 1px solid #bbb; overflow: hidden; }
.pane { width: 917px; flex: none; padding-left: 7px; border-right: 1px solid #b8b8b8; overflow: hidden; }
.empty { flex: 1; position: relative; }
.cursor { position: absolute; left: 114px; top: 393px; width: 13px; height: 13px; }
.upper { display: flex; gap: 19px; height: 69px; margin-bottom: 6px; }
table { table-layout: fixed; border-collapse: separate; border-spacing: 0; }
td, th { height: 17px; padding: 0; line-height: 14px; text-align: center; border-right: 1px solid #bfbfbf; border-bottom: 1px solid #bfbfbf; white-space: nowrap; }
.t td { height: 18px; }
.items { width: 501px; flex: none; border-left: 1px solid #bfbfbf; }
.items td, .items th { border-color: #c2c0dc; }
.w40 { width: 40px; }
.w41 { width: 41px; }
.w120 { width: 120px; }
.lil { background: #ccc8fa; }
.items .tot { text-align: left; padding-left: 2px; border-right: 0; }
.items .sum { background: #9ade06; border-right: 0; text-align: right; padding-right: 4px; font-weight: 700; }
.note { width: 341px; flex: none; margin: 0; padding: 0 2px; overflow: hidden; border: 1px solid #bfbfbf; border-top: 0; font-weight: 700; line-height: 15px; white-space: nowrap; }
.lower { display: flex; gap: 19px; align-items: flex-start; }
.plot { width: 581px; flex: none; border: 1px solid #bfbfbf; border-width: 0 1px; }
.plot h2, .plot p { margin: 0; padding-left: 2px; font-size: 11px; height: 17px; line-height: 17px; border-bottom: 1px solid #c8c8c8; }
.plot p { height: 18px; }
.map { width: 578px; height: 373px; }
.streets { font: 500 38px Roboto, sans-serif; fill: #fff; stroke: #151515; stroke-width: 9px; stroke-linejoin: round; paint-order: stroke; }
.streets .large { font-size: 43px; }
.streets .narrow { font-size: 35px; }
.sched { width: 261px; flex: none; }
.sched tr > :first-child { border-left: 1px solid #bfbfbf; }
.sched tr:first-child th { border-top: 1px solid #bfbfbf; }
.sched tr { height: 17px; }
.sched tr:nth-child(3n+2), .sched tr:nth-child(3n+2) > * { height: 18px; }
.sched .left { text-align: left; padding-left: 2px; }
.sched .two-line { line-height: 15px; }
.sched .pre { font-size: 10px; }

/* Scroll bars */
.vscroll { display: flex; flex-direction: column; width: 17px; flex: none; background: #f1f1f1; }
.vscroll button { height: 14px; }
.vscroll button svg, .hscroll button svg { width: 10px; height: 10px; }
.vtrack { flex: 1; display: flex; flex-direction: column; align-items: center; }
.vtrack .thumb { width: 7px; height: 60px; }
.vtrack .before { flex: 303; }
.vtrack .after { flex: 114; }
.thumb { display: block; background: #6a6a6a; border-radius: 4px; }

/* Sheet tabs */
.sheetbar { display: flex; align-items: center; flex: none; height: 19px; border-top: 1px solid #b5b5b5; background: #f5f5f5; }
.nav { width: 18px; }
.nav:first-child { margin-left: 12px; }
.nav svg { width: 8px; height: 8px; }
.stabs { display: flex; margin-left: 19px; font-size: 11px; color: #4c4c4c; align-self: flex-start; }
.stabs a { position: relative; padding: 0 11px; height: 16px; line-height: 14px; }
.stabs a:nth-child(n+2)::after { content: ""; position: absolute; right: 0; top: 2px; bottom: 2px; border-right: 1px solid #c5c5c5; }
.stabs .cur { padding: 0 5px 0 7px; background: #fff; border-bottom: 2px solid #1e7145; color: #1e7a3c; font-weight: 700; }
.stabs .pls { padding: 0 9px; }
.add { margin-left: 20px; }
.add svg { width: 14px; height: 14px; }
.hscroll { display: flex; align-items: center; width: 498px; margin: 0 17px 0 auto; }
.hscroll .dots { margin-right: 10px; }
.htrack { flex: 1; padding-left: 14px; }
.htrack .thumb { width: 84px; height: 7px; }

/* Status bar */
.status { display: flex; align-items: center; flex: none; height: 18px; padding-left: 6px; background: #f2f2f2; font-size: 8px; white-space: nowrap; }
.rec { width: 12px; height: 12px; margin: 0 14px 0 16px; }
.acc { width: 12px; height: 12px; margin-right: 3px; }
.ready { min-width: 27px; }
.views { display: flex; align-items: center; margin-left: auto; height: 18px; }
.view { display: flex; align-items: center; justify-content: center; width: 33px; height: 18px; }
.view svg { width: 12px; height: 12px; }
.sel-view { background: #dcdcdc; }
.z { width: 12px; }
.z svg { width: 8px; height: 8px; }
.z:last-child { margin-right: 2px; }
.view + .z { margin-left: 2px; }
.views input { appearance: none; width: 86px; height: 12px; margin: 0; background: linear-gradient(#777, #777) center / 100% 1px no-repeat; }
.views input::-webkit-slider-thumb { appearance: none; width: 4px; height: 10px; background: #555; }
```
